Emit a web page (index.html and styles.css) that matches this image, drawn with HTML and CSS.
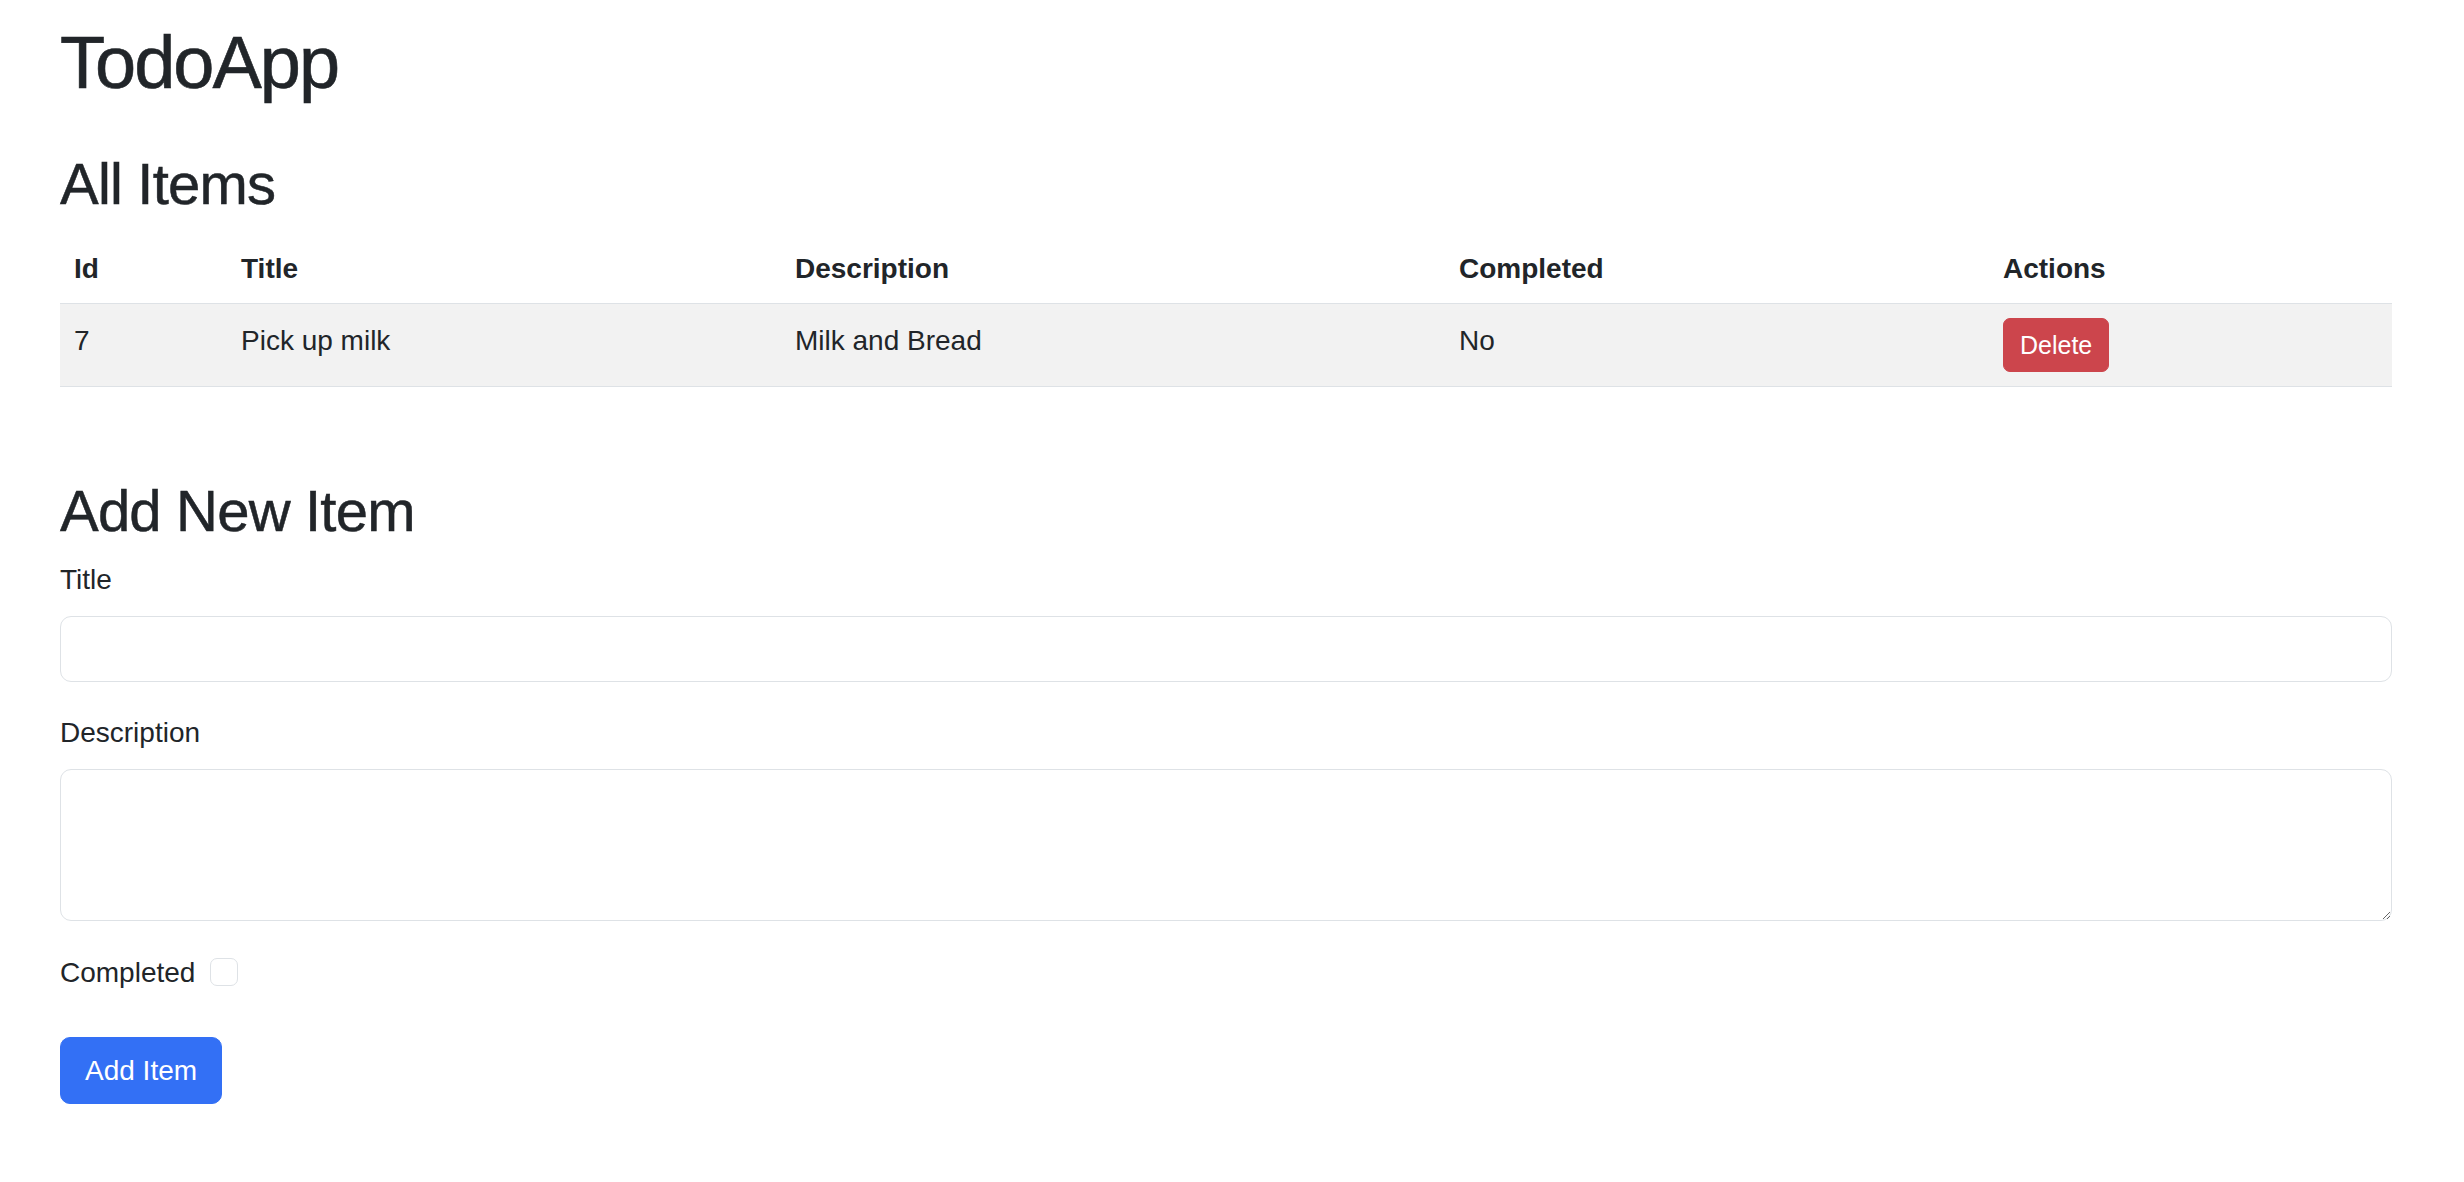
FILE: index.html
```html
<!DOCTYPE html>
<html lang="en">
<head>
<meta charset="utf-8">
<title>TodoApp</title>
<link rel="stylesheet" href="styles.css">
</head>
<body>
<div class="page">
  <h1 class="app-title">TodoApp</h1>

  <h2 class="section-title section-first">All Items</h2>
  <table class="items">
    <thead>
      <tr>
        <th class="c-id">Id</th>
        <th class="c-title">Title</th>
        <th class="c-desc">Description</th>
        <th class="c-done">Completed</th>
        <th class="c-act">Actions</th>
      </tr>
    </thead>
    <tbody>
      <tr class="striped">
        <td>7</td>
        <td>Pick up milk</td>
        <td>Milk and Bread</td>
        <td>No</td>
        <td class="cell-action"><button class="btn-delete" type="button">Delete</button></td>
      </tr>
    </tbody>
  </table>

  <h2 class="section-title section-second">Add New Item</h2>
  <form class="item-form">
    <div class="field">
      <label class="field-label" for="title">Title</label>
      <input class="field-input" id="title" type="text">
    </div>
    <div class="field">
      <label class="field-label" for="desc">Description</label>
      <textarea class="field-textarea" id="desc"></textarea>
    </div>
    <div class="check-row">
      <label class="check-label" for="done">Completed</label>
      <input class="check-box" id="done" type="checkbox">
    </div>
    <button class="btn-add" type="button">Add Item</button>
  </form>
</div>
</body>
</html>
```

FILE: styles.css
```css
html, body {
  margin: 0;
  padding: 0;
  background: #ffffff;
}

body {
  font-family: "Liberation Sans", Arial, sans-serif;
  font-size: 28px;
  line-height: 42px;
  color: #212529;
}

.page {
  padding: 0 72px 30px 60px;
}

.app-title {
  margin: 19px 0 0;
  font-size: 74px;
  line-height: 88px;
  font-weight: normal;
  letter-spacing: -2px;
  -webkit-text-stroke: 0.6px #212529;
}

.section-title {
  font-size: 58px;
  line-height: 70px;
  font-weight: normal;
  letter-spacing: -0.8px;
  -webkit-text-stroke: 0.5px #212529;
}

.section-first {
  margin: 42px 0 14px;
}

.section-second {
  margin: 89px 0 13px;
}

.items {
  width: 100%;
  border-collapse: collapse;
  table-layout: fixed;
}

.items th,
.items td {
  box-sizing: border-box;
  text-align: left;
  border-bottom: 1px solid #dee2e6;
}

.items th {
  font-weight: bold;
  vertical-align: bottom;
  padding: 15px 14px 13px;
}

.items td {
  vertical-align: top;
  padding: 16px 14px 12px;
}

.items .cell-action {
  padding: 14px 14px;
}

.striped td {
  background: #f2f2f2;
}

.c-id { width: 167px; }
.c-title { width: 554px; }
.c-desc { width: 664px; }
.c-done { width: 544px; }
.c-act { width: 403px; }

.btn-delete {
  display: block;
  height: 54px;
  padding: 0 16px;
  border: 1px solid #cc454c;
  border-radius: 7px;
  background: #cc454c;
  color: #ffffff;
  font-family: "Liberation Sans", Arial, sans-serif;
  font-size: 25px;
  line-height: 52px;
}

.field {
  margin-bottom: 30px;
}

.field-label {
  display: block;
  margin-bottom: 15px;
}

.field-input,
.field-textarea {
  display: block;
  box-sizing: border-box;
  width: 100%;
  margin: 0;
  border: 1px solid #dee2e6;
  border-radius: 11px;
  background: #ffffff;
  font-family: "Liberation Sans", Arial, sans-serif;
  font-size: 28px;
  color: #212529;
  padding: 10px 21px;
}

.field-input {
  height: 66px;
}

.field-textarea {
  height: 152px;
  resize: vertical;
}

.check-row {
  display: flex;
  align-items: flex-start;
  margin-top: 31px;
}

.check-box {
  appearance: none;
  -webkit-appearance: none;
  box-sizing: border-box;
  width: 28px;
  height: 28px;
  margin: 6px 0 0 15px;
  border: 1px solid #dee2e6;
  border-radius: 7px;
  background: #ffffff;
}

.btn-add {
  display: block;
  margin-top: 43px;
  height: 67px;
  padding: 0 24px;
  border: 1px solid #3370f5;
  border-radius: 10px;
  background: #3370f5;
  color: #ffffff;
  font-family: "Liberation Sans", Arial, sans-serif;
  font-size: 28px;
  line-height: 65px;
}
```
